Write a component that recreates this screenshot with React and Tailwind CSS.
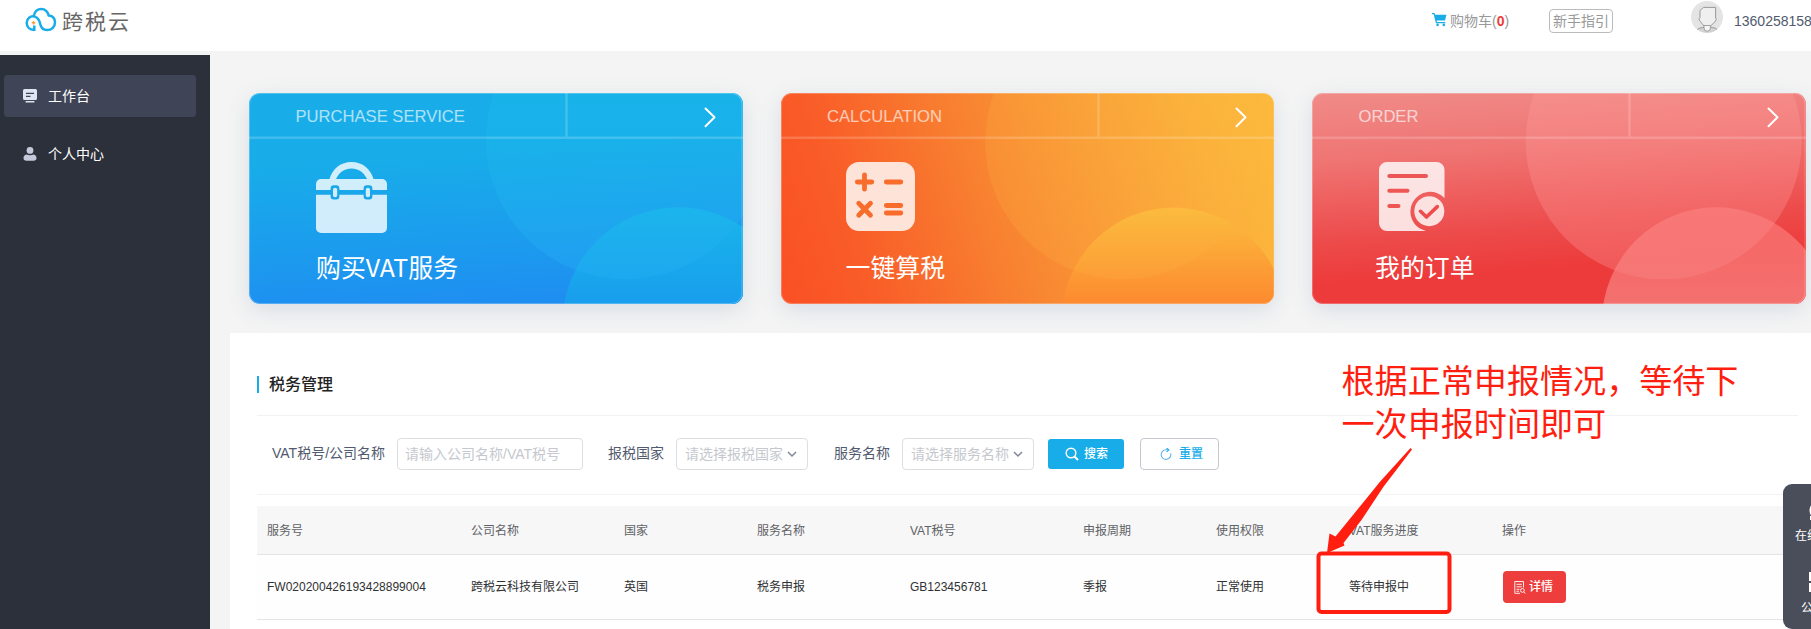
import React from "react";

function Logo() {
  return (
    <svg width="32" height="26" viewBox="0 0 32 26" fill="none">
      <path
        d="M9.300 24V18.500M9.300 23C4.500 22.800 1.700 19.800 1.700 15.700C1.700 11.500 5.500 8.500 9.500 9.600C13.500 10.700 14.600 13.800 15.200 17C16 21 19 23 22.200 23C26.800 23 30 19.600 30 15.600C30 11.800 27.600 9 23.800 8.600C22.600 4.400 19.600 2 16.300 2C12.600 2 9.600 4.600 9 8.600"
        stroke="#18ade9"
        strokeWidth="2.500"
        strokeLinejoin="round"
      />
      <path d="M7.800 14h1.500v3.400h-1.500z M6.800 15h3.500v1.400h-3.500z" fill="#f6a13a" />
    </svg>
  );
}

function CartIcon() {
  return (
    <svg width="15" height="14" viewBox="0 0 15 14" fill="#18ade9">
      <path d="M0 0h2.600l.5 1.800H14.400L13 7.600H4.600l.3 1.300h8.400v1.300H3.900L1.700 1.200H0z" />
      <circle cx="5.600" cy="11.900" r="1.300" />
      <circle cx="11.800" cy="11.900" r="1.300" />
    </svg>
  );
}

function Avatar() {
  return (
    <svg width="32" height="32" viewBox="0 0 32 32" fill="none">
      <circle cx="16" cy="16" r="16" fill="#e4e4e4" />
      <path d="M6.500 28.500C8.500 26.500 11 26.800 13 26.200H19.500C22 26.800 24.500 26.500 26 28.500A16 16 0 0 1 6.500 28.500z" fill="#d2d2d2" />
      <path d="M6.500 28.500C8.500 26.500 11 26.800 13 26.200M19.500 26.200C22 26.800 24.500 26.500 26 28.500" stroke="#999" />
      <path d="M12.500 6.400H24.600V17L25.300 18.500L23.800 21L19.500 25H13L9.300 20.500L7.800 18L9 16.500V9.500z" fill="#efefef" stroke="#999" />
      <path d="M13 24.500h6.400v2.500a3.200 3.200 0 0 1-6.400 0z" fill="#f6f6f6" stroke="#999" strokeWidth=".9" />
    </svg>
  );
}

function Header() {
  return (
    <header className="flex h-[51px] w-[1900px] shrink-0 bg-white">
      <div className="flex w-[1432px] items-start pl-[25px]">
        <div className="mt-[7px]"><Logo /></div>
        <span className="ml-[5px] mt-[7px] text-[21px] leading-[30px] tracking-[2px] text-[#666]">跨税云</span>
      </div>
      <div className="mt-[13px] flex w-[117px] items-start">
        <CartIcon />
        <span className="ml-[3px] mt-[-3px] text-sm leading-[22px] text-[#999]">
          购物车(<b className="text-[#ed3d3d]">0</b>)
        </span>
      </div>
      <div className="w-[142px]">
        <button className="mt-[9px] flex h-6 w-16 items-center justify-center rounded border border-[#bbb] text-sm leading-none text-[#999]">新手指引</button>
      </div>
      <div className="mt-[1px]"><Avatar /></div>
      <span className="ml-[11px] mt-[10px] text-sm leading-[22px] text-[#515a6e]">1360258158</span>
    </header>
  );
}

function Sidebar() {
  return (
    <aside className="mt-1 w-[210px] shrink-0 bg-[#2c303b] pt-5 pl-1 text-sm text-white">
      <div className="flex h-[42px] w-48 items-center rounded bg-[#3f4456] pl-[19px]">
        <svg width="14" height="14" viewBox="0 0 14 14" fill="#dfe4f2">
          <path fillRule="evenodd" d="M1.500 0h11A1.500 1.500 0 0 1 14 1.500v8a1.500 1.500 0 0 1-1.500 1.500h-11A1.500 1.500 0 0 1 0 9.500v-8A1.500 1.500 0 0 1 1.500 0zM3 3.700v1.200h8V3.700zM3 6.800v1.200h4.500V6.800z" />
          <rect x="2.500" y="12" width="9" height="1.600" rx=".5" />
        </svg>
        <span className="ml-[11px]">工作台</span>
      </div>
      <div className="mt-4 flex h-[42px] w-48 items-center pl-[19px]">
        <svg width="14" height="14" viewBox="0 0 14 14" fill="#c3c9d9">
          <circle cx="7" cy="3.400" r="3.400" />
          <path d="M3.500 7.600Q7 9 10.500 7.600Q13.500 8.400 13.500 11Q13.500 13.700 10.500 13.700H3.500Q.5 13.700 .5 11Q.5 8.400 3.500 7.600z" />
        </svg>
        <span className="ml-[11px]">个人中心</span>
      </div>
    </aside>
  );
}

function BagIcon() {
  return (
    <svg width="71" height="71" viewBox="0 0 71 71" fill="#fff" fillOpacity=".8">
      <path d="M13.500 17C16.500 6.500 25 0 35.500 0S54.500 6.500 57.500 17H66a5 5 0 0 1 5 5v6H56.400V26.500a3.200 3.200 0 0 0-3.200-3.200h-2.400a3.200 3.200 0 0 0-3.200 3.200V28H23.400v-1.500a3.200 3.200 0 0 0-3.200-3.200h-2.400a3.200 3.200 0 0 0-3.200 3.200V28H0v-6a5 5 0 0 1 5-5zM20 17H51C47.500 10 42 6.600 35.500 6.600S23.500 10 20 17z" fillRule="evenodd" />
      <path d="M0 32.700H14.600v1.600a3.200 3.200 0 0 0 3.200 3.200h2.400a3.200 3.200 0 0 0 3.200-3.200v-1.600H47.600v1.600a3.200 3.200 0 0 0 3.200 3.200h2.400a3.200 3.200 0 0 0 3.200-3.200v-1.600H71V66a5 5 0 0 1-5 5H5a5 5 0 0 1-5-5z" />
      <rect x="17" y="25.700" width="4.200" height="9.600" rx="2" />
      <rect x="49.800" y="25.700" width="4.200" height="9.600" rx="2" />
    </svg>
  );
}

function CalculatorIcon() {
  return (
    <svg width="70" height="69" viewBox="0 0 70 69" fill="none">
      <rect width="69" height="69" rx="13" fill="#fee3d8" />
      <path d="M12 20H26.500M19.200 12.800V27.200M41 20H55.500M13.400 41.200L25.200 53.200M25.200 41.200L13.400 53.200M41 43.500H55.500M41 51H55.500" transform="translate(-.7 0)" stroke="#f96d2c" strokeWidth="4.800" strokeLinecap="round" />
    </svg>
  );
}

function OrderIcon() {
  return (
    <svg className="ml-[4px]" width="66" height="69" viewBox="0 0 66 69" fill="none">
      <path d="M8 0H57.500a8 8 0 0 1 8 8V36A19.800 19.800 0 1 0 47 69H8a8 8 0 0 1-8-8V8a8 8 0 0 1 8-8z" fill="#fff" fillOpacity=".82" />
      <circle cx="50.300" cy="49.200" r="15" fill="#fff" fillOpacity=".82" />
      <path d="M10.300 14H47M10.300 28.800H28.500M10.300 44H19.500" stroke="#ee5555" strokeWidth="4" strokeLinecap="round" />
      <path d="M41.500 49.300L47.500 55L58.300 44.600" stroke="#ee4b4b" strokeWidth="3.600" strokeLinecap="round" strokeLinejoin="round" />
    </svg>
  );
}

const CARDS = [
  {
    id: "purchase",
    label: "PURCHASE SERVICE",
    title: "购买VAT服务",
    icon: <BagIcon />,
    gradient: "bg-[linear-gradient(177deg,#18ade9_0%,#18ade9_30%,#1c9aee_72%,#1f8bf2_100%)]",
    pad: "pl-[67px]",
    big: [376.6, 46.6, 139.7],
    small: [429.2, 229.9, 115.6],
    bigFill: ["#18baea", 0.4, "#27b0f4", 0.35],
    smallFill: ["#18b4ea", 1, "#199eed", 1],
  },
  {
    id: "calculation",
    label: "CALCULATION",
    title: "一键算税",
    icon: <CalculatorIcon />,
    gradient: "bg-[linear-gradient(72deg,#fa5024_0%,#f95d28_17%,#f87f30_41%,#f99a37_63%,#fbb03b_84%,#fcba3d_100%)]",
    pad: "pl-[65px]",
    big: [341.5, 48.9, 137.4],
    small: [392.8, 226.5, 112],
    bigFill: ["#fcba3f", 0.2, "#fdae40", 0.24],
    smallFill: ["#fbbb3d", 1, "#fd8a2f", 1],
  },
  {
    id: "order",
    label: "ORDER",
    title: "我的订单",
    icon: <OrderIcon />,
    gradient: "bg-[linear-gradient(176deg,#f08b88_0%,#ef7573_28%,#ed4c4c_60%,#ed3b3b_78%,#ed3b3b_100%)]",
    pad: "pl-[63px]",
    big: [351.7, 48.3, 138],
    small: [404.4, 228.7, 114.4],
    bigFill: ["#ff9f9c", 0.32, "#f88484", 0.42],
    smallFill: ["#fb7775", 0.7, "#f58280", 0.75],
  },
];

function ServiceCard({ card }) {
  const [bx, by, br] = card.big;
  const [sx, sy, sr] = card.small;
  const [b0, bo0, b1, bo1] = card.bigFill;
  const [s0, so0, s1, so1] = card.smallFill;
  return (
    <div className={"relative h-[211px] w-[493.500px] shrink-0 overflow-hidden rounded-[11px] " + card.gradient}>
      <svg className="absolute inset-0" width="494" height="211" viewBox="0 0 494 211">
        <defs>
          <linearGradient id={card.id + "-big"} gradientUnits="userSpaceOnUse" x1="0" y1="0" x2="0" y2="187">
            <stop offset="0" stopColor={b0} stopOpacity={bo0} />
            <stop offset="1" stopColor={b1} stopOpacity={bo1} />
          </linearGradient>
          <linearGradient id={card.id + "-small"} gradientUnits="userSpaceOnUse" x1="0" y1="120" x2="0" y2="211">
            <stop offset="0" stopColor={s0} stopOpacity={so0} />
            <stop offset="1" stopColor={s1} stopOpacity={so1} />
          </linearGradient>
        </defs>
        <circle cx={sx} cy={sy} r={sr} fill={`url(#${card.id}-small)`} />
        <circle cx={bx} cy={by} r={br} fill={`url(#${card.id}-big)`} />
        <path d="M0 44.700H494M317.500 0V43.500" stroke="#fff" strokeOpacity=".18" strokeWidth="2.500" />
        <rect x=".5" y=".5" width="492.500" height="210" rx="10.500" fill="none" stroke="#fff" strokeOpacity=".25" />
      </svg>
      <div className="relative flex h-[46px] items-center justify-between pl-[46.500px] pr-[27px] pt-[3px]">
        <span className="text-[16.600px] leading-none text-white/65">{card.label}</span>
        <svg className="-mt-px" width="12" height="21" viewBox="0 0 12 21" fill="none">
          <path d="M1.500 1.500L10.500 10.300L1.500 19.200" stroke="#fff" strokeWidth="2" strokeLinecap="round" strokeLinejoin="round" />
        </svg>
      </div>
      <div className={"relative flex flex-col pt-[23px] " + card.pad}>
        <div className="h-[71px]">{card.icon}</div>
        <div className="mt-[15px] font-['Noto_Sans_CJK_SC',sans-serif] text-[24.900px] leading-[36px] text-white">{card.title}</div>
      </div>
    </div>
  );
}

function Select({ children }) {
  return (
    <div className="flex h-8 w-[132px] items-center rounded border border-[#dcdee2] bg-white pl-2 text-sm text-[#c5c8ce]">
      <span className="whitespace-nowrap">{children}</span>
      <svg className="ml-[4px]" width="10" height="7" viewBox="0 0 10 7" fill="none">
        <path d="M1 1l4 4 4-4" stroke="#808695" strokeWidth="1.500" />
      </svg>
    </div>
  );
}

function Filters() {
  return (
    <div className="flex h-[79px] items-center border-b border-[#f2f2f2] pb-[2px] pl-[15px] text-sm text-[#515a6e]">
      <span className="w-[125px] -translate-y-px whitespace-nowrap">VAT税号/公司名称</span>
      <div className="flex h-8 w-[186px] items-center rounded border border-[#dcdee2] pl-[7px] text-[#c5c8ce]">请输入公司名称/VAT税号</div>
      <span className="ml-[25px] w-[68px] -translate-y-px">报税国家</span>
      <Select>请选择报税国家</Select>
      <span className="ml-[26px] w-[68px] -translate-y-px">服务名称</span>
      <Select>请选择服务名称</Select>
      <button className="ml-[14px] flex h-[30px] w-[76px] items-center rounded-[3px] bg-[#18ade9] pl-[17px] text-xs font-medium text-white">
        <svg width="14" height="14" viewBox="0 0 14 14" fill="none" stroke="#fff" strokeWidth="1.500">
          <circle cx="6" cy="6" r="4.800" />
          <path d="M9.500 9.500L13 13" strokeWidth="1.900" />
        </svg>
        <span className="ml-[5px]">搜索</span>
      </button>
      <button className="ml-4 flex h-8 w-[79px] items-center rounded border border-[#c5c8ce] pl-[19px] text-xs font-medium text-[#18ade9]">
        <svg width="12" height="12" viewBox="0 0 12 12" fill="none" stroke="#5fb4e8" strokeWidth="1.100">
          <path d="M10.600 5.300A4.800 4.800 0 1 1 6 1.800H8.200" />
          <path d="M6.600 0L8.800 1.900L6.600 3.800" stroke="#18ade9" />
        </svg>
        <span className="ml-[7px]">重置</span>
      </button>
    </div>
  );
}

const GRID = "grid grid-cols-[204px_153px_133px_153px_173px_133px_133px_153px_305px] items-center text-xs";
const HEADS = ["服务号", "公司名称", "国家", "服务名称", "VAT税号", "申报周期", "使用权限", "VAT服务进度", "操作"];
const ROW = ["FW020200426193428899004", "跨税云科技有限公司", "英国", "税务申报", "GB123456781", "季报", "正常使用", "等待申报中"];

function TaxTable() {
  return (
    <div className="mt-[11px]">
      <div className={GRID + " h-[49px] border-b border-[#e3e4e6] bg-[#f7f7f7] pt-px text-[#606266]"}>
        {HEADS.map((h) => <div key={h} className="pl-[10px]">{h}</div>)}
      </div>
      <div className={GRID + " h-[65px] border-b border-[#e3e4e6] bg-[#fefefe] text-[#303133]"}>
        {ROW.map((c) => <div key={c} className="whitespace-nowrap pl-[10px]">{c}</div>)}
        <div className="pl-[11px]">
          <button className="flex h-8 w-[63px] items-center rounded bg-[#ed3d3d] pl-[11px] text-white">
            <svg width="12" height="13" viewBox="0 0 12 13" fill="none" stroke="#fff" strokeWidth=".9">
              <path d="M9.500 6.500V.5H.8V12.300H6M2.500 3.300H7.800M2.500 5.800H7.800M2.500 8.300H5.500M2.500 10.300H5" />
              <circle cx="8.400" cy="9.400" r="1.900" />
              <path d="M9.800 10.800L11.300 12.500" />
            </svg>
            <span className="ml-[3px] font-medium">详情</span>
          </button>
        </div>
      </div>
    </div>
  );
}

function Annotation() {
  return (
    <>
      <div className="absolute left-[1341.500px] top-[358px] w-[420px] font-['Noto_Sans_CJK_SC',sans-serif] text-[33.100px] leading-[43px] text-[#ff1e10]">
        <div>根据正常申报情况，等待下</div>
        <div>一次申报时间即可</div>
      </div>
      <svg className="absolute left-[1310px] top-[440px]" width="150" height="180" viewBox="0 0 150 180">
        <path d="M17 113L19.500 93.500L25.500 96.500L47.500 69.500L70 41.700L100.500 8L102 9.500L73.500 46.700L51.500 80L33.500 103L34.500 105.500z" fill="#ff1e10" />
        <rect x="8.500" y="113.500" width="131" height="58.500" rx="3" fill="none" stroke="#ff1e10" strokeWidth="4" />
      </svg>
    </>
  );
}

function FloatingHelp() {
  return (
    <div className="absolute left-[1783px] top-[484px] flex h-[145px] w-[72px] flex-col items-center rounded-[9px] bg-[#434855]/97 pt-[17px] text-xs text-white">
      <svg width="20" height="22" viewBox="0 0 20 22" fill="none" stroke="#fff" strokeWidth="2">
        <circle cx="10" cy="9.500" r="8.500" />
        <path d="M2 15v4" />
      </svg>
      <span className="mt-[4px] leading-[18px]">在线客服</span>
      <svg className="mt-[27px]" width="20" height="20" viewBox="0 0 20 20" fill="#fff">
        <path d="M0 0h9v9H0zM11 0h9v9h-9zM0 11h9v9H0zM11 11h4v4h-4zM16 16h4v4h-4z" />
      </svg>
      <span className="mt-[7px] leading-[18px]">公众号</span>
    </div>
  );
}

export default function App() {
  return (
    <div className="relative flex h-[629px] w-[1811px] flex-col overflow-hidden bg-[#f4f4f4] font-['Liberation_Sans','Noto_Sans_CJK_SC',sans-serif]">
      <Header />
      <div className="flex min-h-0 flex-1">
        <Sidebar />
        <main className="flex flex-col pl-5">
          <div className="flex gap-[38px] pl-[19px] pt-[42px]">
            {CARDS.map((card) => (
              <div key={card.id} className="rounded-[11px] shadow-[0_6px_22px_rgba(60,100,150,0.15)]">
                <ServiceCard card={card} />
              </div>
            ))}
          </div>
          <section className="relative mt-[29px] h-[296px] w-[1600px] bg-white pl-[27px] pt-[42px]">
            <div className="w-[1541px]">
              <div className="flex h-[41px] items-start border-b border-[#f2f2f2]">
                <div className="mt-px flex h-[17px] items-center border-l-2 border-[#18ade9] pl-[10px] text-base font-medium text-[#222]">税务管理</div>
              </div>
              <Filters />
              <TaxTable />
            </div>
          </section>
        </main>
      </div>
      <Annotation />
      <FloatingHelp />
    </div>
  );
}
